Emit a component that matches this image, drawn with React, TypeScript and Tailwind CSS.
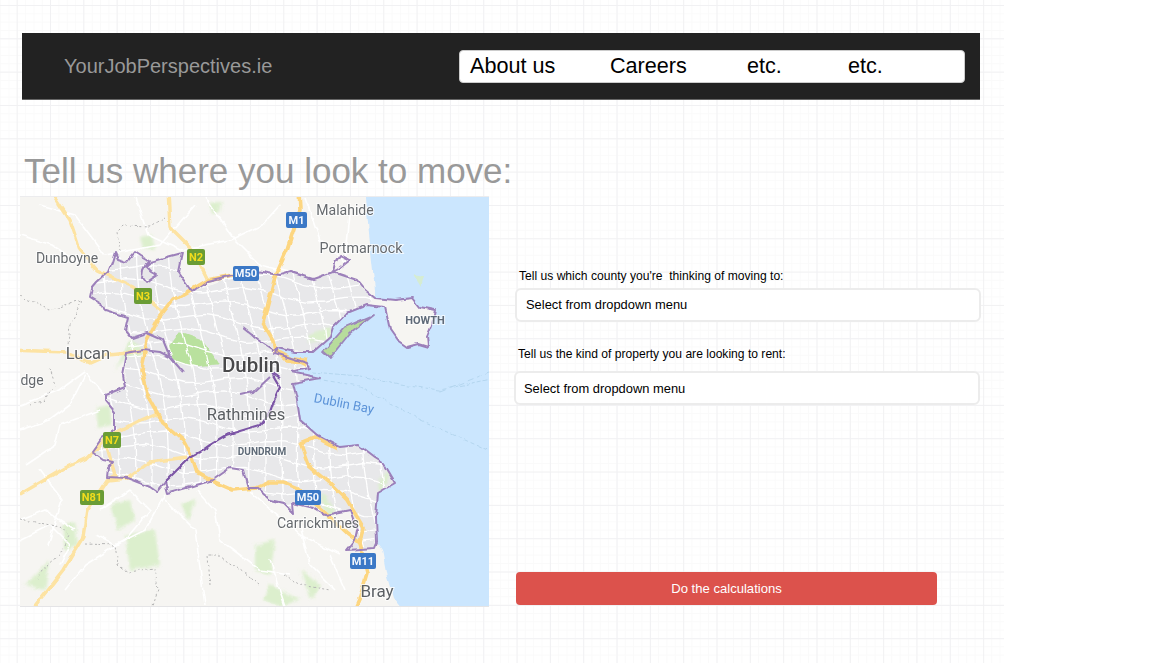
import React from 'react';

const NAV_ITEMS = [
  { label: 'About us', width: 'w-[140px]' },
  { label: 'Careers', width: 'w-[137px]' },
  { label: 'etc.', width: 'w-[101px]' },
  { label: 'etc.', width: 'w-[60px]' },
];

// Map drawing uses page coordinates, viewBox is shifted to match
const SEA =
  'M365 185 L368 223 L372 262 L375 290 L375 298 L395 300 L413 298 L420 307 L435 310 L432 325 L427 337 L428 347 L418 344 L407 347 L397 340 L390 330 L385 307 L367 305 L347 313 L333 327 L330 337 L313 352 L295 352 L277 348 L275 353 L307 363 L309 368 L292 372 L320 378 L293 383 L297 400 L300 420 L317 435 L340 447 L358 445 L375 458 L383 463 L395 483 L378 493 L376 517 L377 543 L382 550 L387 577 L393 597 L412 620 L510 620 L510 185 Z';

const CITY =
  'M192 292 L233 275 L250 270 L280 275 L290 272 L313 279 L333 272 L357 280 L375 298 L367 305 L347 313 L333 327 L330 337 L313 352 L277 348 L275 353 L307 363 L292 372 L320 378 L293 383 L297 400 L300 420 L317 435 L340 447 L358 445 L375 458 L383 463 L395 483 L378 493 L376 517 L375 548 L347 550 L355 540 L357 530 L350 510 L325 515 L313 508 L292 503 L293 513 L283 503 L270 500 L257 488 L248 488 L243 470 L230 468 L213 480 L190 487 L168 493 L165 482 L157 492 L150 487 L127 478 L107 477 L113 462 L92 452 L102 438 L115 430 L115 412 L105 400 L105 395 L125 387 L127 353 L132 338 L125 330 L128 317 L103 305 L90 297 L97 282 L108 272 L115 252 L127 262 L135 252 L148 260 L182 253 L178 272 Z';

const BOUNDARY_PATHS = [
  'M192 292 L178 272 L182 253 L167 257 L150 262 L146 266 L152 272 L157 275 L146 283 L142 278 L143 270 L148 260 L141 256 L135 252 L127 262 L118 259 L115 252 L112 262 L108 272 L97 282 L92 288 L90 297 L103 305 L105 310 L128 317 L125 330 L132 338 L147 333 L163 340 L170 357 L183 372',
  'M127 478 L107 477 L108 468 L113 462 L103 460 L92 452 L102 438 L115 430 L115 412 L105 400 L105 395 L125 387 L123 375 L127 353 L143 350 L160 352 L170 357',
  'M192 292 L207 281 L233 275 L250 270 L280 275 L290 272 L313 279 L333 272 L335 263 L340 255 L350 260 L340 268 L333 272 L345 276 L357 280 L365 290 L375 298 L395 300 L413 298 L420 307 L435 310 L432 325 L427 337 L428 347 L418 344 L407 347 L397 340 L390 330 L385 307 L367 305 L347 313 L333 327 L330 337 L313 352 L295 352 L277 348',
  'M243 328 L258 340 L273 350 L277 348 L275 353 L307 363 L309 368 L292 372 L320 378 L293 383 L297 400 L300 420 L317 435 L340 447 L358 445 L375 458 L383 463 L395 483 L378 493 L376 517 L377 543 L375 548 L347 550 L355 540 L357 530 L350 510 L325 515 L313 508 L292 503 L293 513 L283 503 L270 500 L257 488 L248 488 L243 470 L230 468 L213 480 L190 487 L168 493 L165 482 L157 492 L150 487 L127 478',
  'M240 395 L254 392 L270 377',
];

const INNER_BOUNDARY =
  'M165 482 L177 470 L190 457 L203 450 L210 445 L227 435 L240 431 L260 425 L270 412 L273 403 L280 387 L273 375';

const MOTORWAYS = [
  'M233 275 L207 280 L173 300 L157 320 L147 340 L142 370 L147 390 L150 400 L163 423 L183 440 L192 457 L197 472 L217 483 L233 490 L257 488 L270 482 L283 482 L297 488 L320 508 L347 533 L360 543',
  'M299 190 L300 210 L287 250 L275 277 L263 323 L273 340 L275 350 L287 360 L307 363',
  'M360 543 L367 573 L360 597 L352 615',
  'M300 443 L315 437 L337 448 M300 443 L308 465 L330 483 L347 500 L363 527 L360 543',
];

const MAJOR_ROADS = [
  'M50 190 L70 220 L80 250 L97 270 L133 287 L163 312',
  'M168 190 L170 227 L193 250 L208 280',
  'M10 350 L67 352 L90 363 L108 355 L127 353 L143 350',
  'M10 500 L67 467 L87 458 L107 438 L137 422 L157 413',
  'M107 447 L115 475 L107 480 L87 510 L83 537 L63 570 L30 612',
  'M107 480 L128 478 L150 462 L187 457',
];

// Countryside roads outside the city mesh
const WHITE_ROADS = [
  'M40 205 L75 215 L105 255 L160 245 L195 205',
  'M20 235 L52 245 L78 262',
  'M135 197 L148 235 L180 250 L230 240 L262 225 L280 205',
  'M205 197 L235 240 L260 265 L300 275',
  'M305 197 L320 240 L345 262 L350 215',
  'M20 405 L60 390 L85 372 L105 395',
  'M20 430 L50 420 L70 405 L85 375',
  'M25 465 L55 445 L60 425 L100 410',
  'M100 510 L130 490 L150 510 L125 540 L85 565 L65 590',
  'M20 540 L50 525 L70 545 L60 565 M20 520 L45 510 L75 530',
  'M165 495 L145 530 L115 545 L95 535',
  'M197 490 L215 510 L220 540 L260 570 L290 575',
  'M250 492 L300 535 L340 555',
  'M300 525 L310 565 L335 590 M270 560 L285 606',
  'M165 500 L195 530 L205 606',
  'M330 555 L345 590 M40 470 L62 500 L48 545',
];

const DOTTED = [
  'M120 252 L117 232 L123 226 L150 227 L165 218',
  'M20 296 L40 305 L50 310 L65 304 L82 300',
  'M82 300 L70 325 L68 345 M50 368 L55 385 L45 400 L30 405',
  'M20 519 L60 527 L70 535 L60 555 L42 570 L38 578',
  'M85 544 L115 545 L118 565 L128 572 L155 568 L158 590 L153 606',
  'M210 585 L208 555 L218 555 L240 570 L260 585',
  'M285 575 L300 585 L330 590',
];

const PARKS = [
  'M115 370 L130 340 L140 345 L145 355 L125 358 Z',
  'M96 408 L110 405 L112 425 L98 428 Z',
  'M62 525 L75 522 L78 545 L65 550 Z',
  'M110 505 L130 500 L135 520 L118 530 Z',
  'M125 535 L155 530 L160 565 L130 570 Z',
  'M180 505 L195 500 L188 520 Z',
  'M140 237 L152 235 L155 250 L143 248 Z',
  'M210 203 L222 202 L220 212 L212 214 Z',
  'M310 335 L330 327 L331 338 L308 343 Z',
  'M378 480 L392 470 L380 495 Z',
  'M320 495 L325 495 L335 510 L328 520 Z',
  'M255 545 L275 540 L270 575 L255 570 Z',
  'M300 570 L320 585 L312 600 Z',
  'M270 585 L300 600 L280 606 L262 600 Z',
  'M25 585 L50 560 L45 590 Z',
];

const BADGES = [
  { text: 'M1', x: 286, y: 212, w: 21, h: 16, fill: '#3a78c6', color: '#f3f7fd' },
  { text: 'M50', x: 233, y: 266, w: 26, h: 15, fill: '#3a78c6', color: '#f3f7fd' },
  { text: 'N2', x: 187, y: 249, w: 18, h: 16, fill: '#6a9c36', color: '#f2dc1e' },
  { text: 'N3', x: 134, y: 288, w: 18, h: 16, fill: '#6a9c36', color: '#f2dc1e' },
  { text: 'N7', x: 103, y: 432, w: 18, h: 16, fill: '#6a9c36', color: '#f2dc1e' },
  { text: 'N81', x: 80, y: 490, w: 24, h: 15, fill: '#6a9c36', color: '#f2dc1e' },
  { text: 'M50', x: 295, y: 490, w: 26, h: 15, fill: '#3a78c6', color: '#f3f7fd' },
  { text: 'M11', x: 350, y: 553, w: 26, h: 16, fill: '#3a78c6', color: '#f3f7fd' },
];

const LABELS = [
  { text: 'Malahide', x: 345, y: 215, size: 14, color: '#666a6e' },
  { text: 'Portmarnock', x: 361, y: 253, size: 14.3, color: '#666a6e' },
  { text: 'Dunboyne', x: 67, y: 263, size: 14, color: '#666a6e' },
  { text: 'Lucan', x: 88, y: 359, size: 16.5, color: '#5c6064' },
  { text: 'dge', x: 32, y: 385, size: 14, color: '#666a6e' },
  { text: 'Rathmines', x: 246, y: 420, size: 16.5, color: '#5c6064' },
  { text: 'Carrickmines', x: 318, y: 528, size: 14, color: '#666a6e' },
  { text: 'Bray', x: 377, y: 597, size: 17, color: '#5c6064' },
];

// Jittered street mesh, clipped to the grey city area
function buildMesh() {
  const lines: string[] = [];
  for (let y = 262; y < 560; y += 15) {
    let d = '';
    for (let x = 85; x <= 400; x += 20) {
      const py = y + Math.sin(x * 0.37 + y * 0.91) * 5 + (x - 240) * 0.08;
      d += `${d ? 'L' : 'M'}${x} ${py.toFixed(1)} `;
    }
    lines.push(d);
  }
  for (let x = 90; x < 400; x += 17) {
    let d = '';
    for (let y = 250; y <= 560; y += 20) {
      const px = x + Math.sin(y * 0.29 + x * 0.73) * 6 + (y - 400) * 0.12;
      d += `${d ? 'L' : 'M'}${px.toFixed(1)} ${y} `;
    }
    lines.push(d);
  }
  return lines;
}

const MESH = buildMesh();

function DublinMap() {
  return (
    <svg viewBox="20 197 469 409" className="block w-full h-[409px]" fontFamily="Roboto, sans-serif">
      <defs>
        <filter id="wobble" filterUnits="userSpaceOnUse" x="0" y="180" width="520" height="450">
          <feTurbulence type="fractalNoise" baseFrequency="0.09" numOctaves="2" seed="4" result="noise" />
          <feDisplacementMap in="SourceGraphic" in2="noise" scale="5" xChannelSelector="R" yChannelSelector="G" />
          <feGaussianBlur stdDeviation="0.55" />
        </filter>
        <filter id="parkBlur" filterUnits="userSpaceOnUse" x="0" y="180" width="520" height="450">
          <feGaussianBlur stdDeviation="1.8" />
        </filter>
        <filter id="softer" filterUnits="userSpaceOnUse" x="0" y="180" width="520" height="450">
          <feGaussianBlur stdDeviation="0.3" />
        </filter>
        <clipPath id="cityClip">
          <path d={CITY} />
        </clipPath>
      </defs>

      <rect x="20" y="197" width="469" height="409" fill="#f6f5f2" />
      <g filter="url(#wobble)">
        <path d={CITY} fill="#e8e8ea" />
        <g filter="url(#parkBlur)">
          {PARKS.map((d) => (
            <path key={d} d={d} fill="#dcefcd" />
          ))}
        </g>
        <path d="M170 347 L180 333 L200 340 L217 363 L195 365 L173 360 Z" fill="#b9e19e" stroke="#b9e19e" strokeWidth="3" strokeLinejoin="round" />
        <g clipPath="url(#cityClip)">
          {MESH.map((d) => (
            <path key={d} d={d} fill="none" stroke="#ffffff" strokeWidth="1.3" strokeLinejoin="round" />
          ))}
        </g>
        {WHITE_ROADS.map((d) => (
          <path key={d} d={d} fill="none" stroke="#ffffff" strokeWidth="1.6" strokeLinejoin="round" />
        ))}
        {DOTTED.map((d) => (
          <path key={d} d={d} fill="none" stroke="#b5b5b5" strokeWidth="1" strokeDasharray="2 2.5" />
        ))}
        <path d={SEA} fill="#cbe6fe" />
        <path d="M413 274 L424 276 L421 287 Z" fill="#d5ecd2" />
        <path d="M373 315 L345 327 L323 352 L330 358 L350 333 Z" fill="#b7dc9c" stroke="#9c86ba" strokeWidth="1.8" strokeLinejoin="round" />
        <path d="M312 372 L360 376 L400 385 L440 390 L510 375" fill="none" stroke="#b4d6ef" strokeWidth="1" strokeDasharray="4 2" />
        <path d="M310 378 L360 386 L420 420 L510 460" fill="none" stroke="#b4d6ef" strokeWidth="1" strokeDasharray="4 3" />
        <path d="M440 392 L510 364" fill="none" stroke="#b4d6ef" strokeWidth="1" strokeDasharray="6 4" />
        {MAJOR_ROADS.map((d) => (
          <path key={d} d={d} fill="none" stroke="#fde3a2" strokeWidth="3.4" strokeLinejoin="round" />
        ))}
        {MOTORWAYS.map((d) => (
          <path key={d} d={d} fill="none" stroke="#fdd680" strokeWidth="3.6" strokeLinejoin="round" />
        ))}
        <path d="M275 350 L290 358 L307 360 M280 352 L306 366" fill="none" stroke="#fdd680" strokeWidth="2.5" />
        {BOUNDARY_PATHS.map((d) => (
          <path key={d} d={d} fill="none" stroke="#9c80ba" strokeWidth="2" strokeLinejoin="round" />
        ))}
        <path d={INNER_BOUNDARY} fill="none" stroke="#7c55a6" strokeWidth="2.2" strokeLinejoin="round" />
        <path d="M280 378 L273 373" fill="none" stroke="#7c55a6" strokeWidth="2" />
      </g>

      <g filter="url(#softer)">
        {BADGES.map((b) => (
          <g key={`${b.text}-${b.x}`}>
            <rect x={b.x} y={b.y} width={b.w} height={b.h} rx="2" fill={b.fill} />
            <text
              x={b.x + b.w / 2}
              y={b.y + b.h / 2 + 3.8}
              textAnchor="middle"
              fontSize="11"
              fontWeight="700"
              fill={b.color}
            >
              {b.text}
            </text>
          </g>
        ))}
        {LABELS.map((l) => (
          <text
            key={l.text}
            x={l.x}
            y={l.y}
            textAnchor="middle"
            fontSize={l.size}
            fill={l.color}
            stroke="#ffffff"
            strokeOpacity="0.75"
            strokeWidth="2"
            paintOrder="stroke"
          >
            {l.text}
          </text>
        ))}
        <text x="251" y="372" textAnchor="middle" fontSize="20.5" fontWeight="500" fill="#4a4a4c" stroke="#ffffff" strokeOpacity="0.8" strokeWidth="2" paintOrder="stroke">
          Dublin
        </text>
        <text x="262" y="455" textAnchor="middle" fontSize="10" fontWeight="700" fill="#5f6b78" stroke="#ffffff" strokeOpacity="0.8" strokeWidth="2" paintOrder="stroke">
          DUNDRUM
        </text>
        <text x="425" y="324" textAnchor="middle" fontSize="11" fontWeight="700" fill="#5f6b78" stroke="#ffffff" strokeOpacity="0.7" strokeWidth="2" paintOrder="stroke">
          HOWTH
        </text>
        <text x="344" y="408" textAnchor="middle" fontSize="13" fill="#5c93d8" transform="rotate(11 344 404)">
          Dublin Bay
        </text>
      </g>
    </svg>
  );
}

function SelectBox({ className }: { className: string }) {
  return (
    <div className={`h-[34px] w-[466px] flex items-center bg-white border-2 border-[#ececec] rounded-md text-[12.9px] text-black ${className}`}>
      Select from dropdown menu
    </div>
  );
}

export default function App() {
  return (
    <div className="w-[1152px] h-[663px] overflow-hidden bg-white font-['Liberation_Sans',Arial,sans-serif]">
      {/* Grid paper background */}
      <div className="w-[1004px] h-full pt-[33px] pl-[20px] [background-image:linear-gradient(to_right,#f1f1f3_1px,transparent_1px),linear-gradient(to_bottom,#f1f1f3_1px,transparent_1px),linear-gradient(to_right,#fafafa_1px,transparent_1px),linear-gradient(to_bottom,#fafafa_1px,transparent_1px)] [background-size:33.333px_33.333px,33.333px_33.333px,8.333px_8.333px,8.333px_8.333px] [background-position:16.667px_5px,16.667px_5px,0.2px_5px,0.2px_5px]">
        {/* Header */}
        <header className="ml-[2px] w-[958px] h-[67px] flex items-center justify-between bg-[#222222] border-b border-[#666666] pl-[42px] pr-[15px]">
          <span className="text-[20px] text-[#999999]">YourJobPerspectives.ie</span>
          <nav className="w-[506px] h-[33px] flex items-center pl-[10px] pt-px bg-white rounded border border-[#cccccc] text-[21.6px] text-black">
            {NAV_ITEMS.map((item, i) => (
              <span key={i} className={`${item.width} shrink-0`}>
                {item.label}
              </span>
            ))}
          </nav>
        </header>

        <h1 className="mt-[51px] ml-[4px] h-[40px] text-[35px] leading-[40px] text-[#999999] font-normal whitespace-nowrap">
          Tell us where you look to move:
        </h1>

        <div className="mt-[6px] flex">
          <div className="w-[469px] h-[409px] shrink-0 shadow-[0_1px_0_#e4e4e6,0_-1px_0_#ececee]">
            <DublinMap />
          </div>

          {/* Form column */}
          <div className="pt-[72px] pl-[25px] flex flex-col items-start">
            <label className="ml-[5px] h-[14px] text-[12.1px] leading-[14px] text-black whitespace-pre">
              Tell us which county you're  thinking of moving to:
            </label>
            <SelectBox className="mt-[5px] ml-[1px] pl-[9px]" />
            <label className="mt-[25px] ml-[4px] h-[14px] text-[12.1px] leading-[14px] text-black">
              Tell us the kind of property you are looking to rent:
            </label>
            <SelectBox className="mt-[10px] pl-[8px] pt-px" />
            <button className="mt-[167px] ml-[2px] w-[421px] h-[33px] bg-[#dc524c] rounded text-[13.1px] text-white">
              Do the calculations
            </button>
          </div>
        </div>
      </div>
    </div>
  );
}
